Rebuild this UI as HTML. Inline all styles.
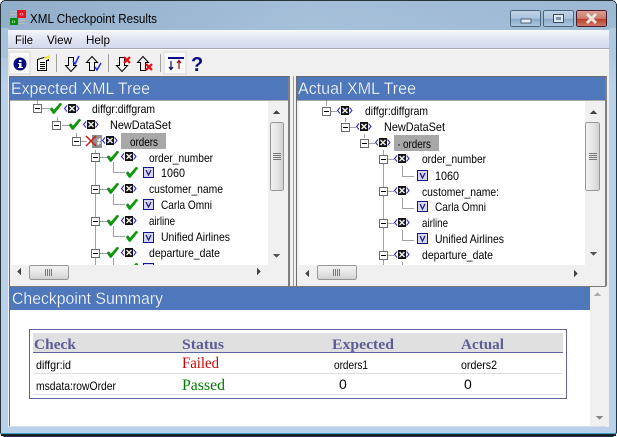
<!DOCTYPE html>
<html><head><meta charset="utf-8"><style>
html,body{margin:0;padding:0;background:#fff;overflow:hidden}
svg{display:block}
text{font-family:"Liberation Sans",sans-serif;fill:#000;font-size:12px}
.s{font-family:"Liberation Serif",serif}
.h{fill:#fff;font-size:17px;stroke:#4e78bb;stroke-width:.3}
.th{font-family:"Liberation Serif",serif;font-weight:bold;font-size:14.500px;fill:#5d5d96}
</style></head><body>
<svg width="617" height="437" viewBox="0 0 617 437" xmlns="http://www.w3.org/2000/svg" shape-rendering="crispEdges">
<defs>
<linearGradient id="frame" x1="0" y1="0" x2="0" y2="1"><stop offset="0" stop-color="#9ab6d1"/><stop offset="0.07" stop-color="#a9c3dc"/><stop offset="0.2" stop-color="#b9d1ea"/><stop offset="1" stop-color="#b9d1ea"/></linearGradient>
<linearGradient id="frameH" x1="0" y1="0" x2="1" y2="0"><stop offset="0" stop-color="#8facc8"/><stop offset="0.5" stop-color="#a6c0da"/><stop offset="1" stop-color="#9cb8d3"/></linearGradient>
<linearGradient id="menu" x1="0" y1="0" x2="0" y2="1"><stop offset="0" stop-color="#f6f8fc"/><stop offset="0.35" stop-color="#e6eaf5"/><stop offset="1" stop-color="#d3d9ec"/></linearGradient>
<linearGradient id="btn" x1="0" y1="0" x2="0" y2="1"><stop offset="0" stop-color="#c2d5e8"/><stop offset="0.5" stop-color="#a9c2dc"/><stop offset="0.55" stop-color="#8aa9c8"/><stop offset="1" stop-color="#b1c9e0"/></linearGradient>
<linearGradient id="cls" x1="0" y1="0" x2="0" y2="1"><stop offset="0" stop-color="#dca097"/><stop offset="0.5" stop-color="#cc7c6c"/><stop offset="0.55" stop-color="#b93f2c"/><stop offset="1" stop-color="#d07a68"/></linearGradient>
<linearGradient id="th" x1="0" y1="0" x2="1" y2="0"><stop offset="0" stop-color="#f2f2f2"/><stop offset="0.5" stop-color="#e6e6e6"/><stop offset="1" stop-color="#cfcfcf"/></linearGradient>
<linearGradient id="tv" x1="0" y1="0" x2="0" y2="1"><stop offset="0" stop-color="#f2f2f2"/><stop offset="0.5" stop-color="#e6e6e6"/><stop offset="1" stop-color="#cfcfcf"/></linearGradient>
<clipPath id="c1"><rect x="11" y="100" width="257" height="165"/></clipPath>
<clipPath id="c2"><rect x="299" y="100" width="286" height="165"/></clipPath>

<g id="minus"><rect x="0.500" y="0.500" width="8" height="8" fill="#fff" stroke="#6a6a6a"/><path d="M2 4.500H7" stroke="#000"/></g>
<path id="check" d="M0 6 L2 4.500 L4 7 L10 0 L12 1 L4.500 10.500 L3 10.500Z" fill="#0a9a0a" stroke="#067006" stroke-width=".4" shape-rendering="auto"/>
<g id="xml"><path d="M3 1.500 L0.500 4.500 L3 7.500 M12.500 1.500 L15 4.500 L12.500 7.500" fill="none" stroke="#2222dd" stroke-width="1" shape-rendering="auto"/><rect x="4" y="0" width="8" height="9" fill="#111"/><path d="M5.500 2 L10.500 7 M10.500 2 L5.500 7" stroke="#eee" stroke-width="1.500" shape-rendering="auto"/></g>
<g id="vb"><rect x="0.500" y="0.500" width="10" height="10" fill="#d6d6ee" stroke="#14148a"/><path d="M3 3 L5.500 8 L8 3" fill="none" stroke="#14148a" stroke-width="1.200" shape-rendering="auto"/></g>
</defs>

<!-- window frame -->
<rect x="0" y="0" width="617" height="437" fill="#fff"/>
<rect x="0.500" y="0.500" width="616" height="436" rx="5" fill="url(#frame)" stroke="#28343c"/>
<rect x="1" y="1" width="615" height="29" rx="4" fill="url(#frameH)" opacity=".85"/>
<rect x="1" y="28" width="8" height="30" fill="#a9c3dc"/>
<rect x="609" y="28" width="7" height="30" fill="#b0c9e2"/>
<path d="M1 434.500H616" stroke="#1c2a30"/><path d="M2 433.500H615" stroke="#3aa0c8"/><path d="M1 435.500H616" stroke="#141c20"/>

<!-- title icon -->
<rect x="17" y="10" width="9" height="8" fill="#ee0f18"/>
<rect x="10" y="11" width="7" height="1" fill="#bbb"/><rect x="10" y="14" width="7" height="1" fill="#bbb"/>
<rect x="10" y="18" width="8" height="7" fill="#0b8a0b"/>
<rect x="18" y="20" width="7" height="1" fill="#bbb"/><rect x="18" y="23" width="7" height="1" fill="#bbb"/>
<text x="19.500" y="16" style="font-size:6px;fill:#fff">‹›</text>
<text x="11.500" y="23.500" style="font-size:6px;fill:#fff">‹›</text>
<text x="30" y="23" textLength="127" lengthAdjust="spacingAndGlyphs" style="font-size:13px">XML Checkpoint Results</text>

<!-- window buttons -->
<rect x="510.500" y="10.500" width="30" height="16" rx="2" fill="url(#btn)" stroke="#4b6478"/>
<rect x="521" y="19" width="10" height="4" fill="#e6edf4" stroke="#4b6478" stroke-width=".6"/>
<rect x="543.500" y="10.500" width="30" height="16" rx="2" fill="url(#btn)" stroke="#4b6478"/>
<rect x="553.500" y="14.500" width="10" height="8" fill="#dfe7ef" stroke="#3c4c5c"/><rect x="556" y="17" width="5" height="3" fill="#7a94ad"/>
<rect x="576.500" y="10.500" width="30" height="16" rx="2" fill="url(#cls)" stroke="#4a1a28"/>
<path d="M587 14 L596 23 M596 14 L587 23" stroke="#e8e4e0" stroke-width="3" shape-rendering="auto"/>

<!-- client -->
<rect x="8" y="30" width="601" height="397" fill="#f0f0f0"/>
<rect x="8" y="30" width="601" height="18" fill="url(#menu)"/>
<rect x="8" y="48" width="601" height="1" fill="#a4a8b0"/>
<rect x="8" y="49" width="601" height="1" fill="#fff"/>
<text x="15" y="44" textLength="18" lengthAdjust="spacingAndGlyphs">File</text>
<text x="47" y="44" textLength="25" lengthAdjust="spacingAndGlyphs">View</text>
<text x="86" y="44" textLength="24" lengthAdjust="spacingAndGlyphs">Help</text>

<!-- toolbar -->
<rect x="9" y="52" width="21" height="22" fill="#f9f9f9" stroke="#d8d8d8"/>
<circle cx="20" cy="64" r="6.500" fill="#0a0a80" shape-rendering="auto"/>
<rect x="19" y="60" width="2.500" height="2" fill="#fff"/><rect x="18" y="63" width="3.500" height="1" fill="#fff"/><rect x="19" y="63" width="2.500" height="4" fill="#fff"/><rect x="18" y="67" width="5" height="1" fill="#fff"/>

<path d="M37.500 59.500 L47.500 56.500 L48.500 60.500 H46.500 V70.500 H37.500Z" fill="#fff" stroke="#000"/>
<path d="M40 62.500H45M40 64.500H45M40 66.500H45M40 68.500H45" stroke="#000"/>
<path d="M44 57 L50 55 L49 59 L45 59Z" fill="#f2e44c"/>
<rect x="56" y="54" width="1" height="18" fill="#a0a0a0"/>

<g fill="none" stroke="#000" shape-rendering="auto">
<path d="M68.500 57.500 H73.500 V65.500 H76.500 L71 71.500 L65.500 65.500 H68.500Z"/>
<path d="M92 56.500 L97.500 62.500 H94.500 V70.500 H89.500 V62.500 H86.500Z"/>
<path d="M119.500 57.500 H124.500 V65.500 H127.500 L122 71.500 L116.500 65.500 H119.500Z"/>
<path d="M143 56.500 L148.500 62.500 H145.500 V70.500 H140.500 V62.500 H137.500Z"/>
</g>
<path d="M73 61 L75 64 L79 56" fill="none" stroke="#1d2de0" stroke-width="1.500" shape-rendering="auto"/>
<path d="M95 67 L97 70 L101 63" fill="none" stroke="#1d2de0" stroke-width="1.500" shape-rendering="auto"/>
<path d="M124 57 L130 63 M130 57 L124 63" stroke="#e80c12" stroke-width="2.200" shape-rendering="auto"/>
<path d="M146 64 L152 70 M152 64 L146 70" stroke="#e80c12" stroke-width="2.200" shape-rendering="auto"/>
<rect x="108" y="54" width="1" height="18" fill="#a0a0a0"/>
<rect x="160" y="54" width="1" height="18" fill="#a0a0a0"/>
<rect x="164" y="52" width="22" height="22" fill="#f9f9f9" stroke="#d8d8d8"/>
<rect x="168" y="57" width="16" height="2" fill="#0a0a90"/>
<path d="M171 61V69M169 67L171 69.500L173 67" fill="none" stroke="#0a0a60" stroke-width="1.200" shape-rendering="auto"/>
<path d="M179 69V61M177 63L179 60.500L181 63" fill="none" stroke="#8a1010" stroke-width="1.200" shape-rendering="auto"/>
<text x="191" y="71" style="font-size:20px;font-weight:bold;fill:#0a0a80">?</text>

<!-- Expected pane -->
<rect x="9" y="76" width="280" height="210" fill="#f0f0f0"/>
<rect x="9" y="76" width="1" height="210" fill="#6c6c6c"/>
<rect x="288" y="76" width="2" height="210" fill="#808080"/>
<rect x="9" y="76" width="280" height="1" fill="#6c6c6c"/>
<rect x="10" y="77" width="278" height="23" fill="#4e78bb"/>
<rect x="10" y="100" width="278" height="1" fill="#a8a8a8"/>
<text class="h" x="11" y="94" textLength="139" lengthAdjust="spacingAndGlyphs">Expected XML Tree</text>
<rect x="11" y="101" width="257" height="164" fill="#fff"/>

<!-- Actual pane -->
<rect x="296" y="76" width="310" height="210" fill="#f0f0f0"/>
<rect x="293" y="76" width="1" height="210" fill="#a0a0a0"/>
<rect x="296" y="76" width="1" height="210" fill="#6c6c6c"/>
<rect x="605" y="76" width="2" height="210" fill="#808080"/>
<rect x="296" y="76" width="310" height="1" fill="#6c6c6c"/>
<rect x="297" y="77" width="308" height="23" fill="#4e78bb"/>
<rect x="297" y="100" width="308" height="1" fill="#a8a8a8"/>
<text class="h" x="298" y="94" textLength="118" lengthAdjust="spacingAndGlyphs">Actual XML Tree</text>
<rect x="299" y="101" width="286" height="164" fill="#fff"/>

<!-- Expected tree -->
<g clip-path="url(#c1)">
<path transform="translate(.5 .5)" d="M37 100V104M57 117V121M76 133V137M95 150V265M113 162V172H125M113 194V204H125M113 226V236H125M113 258V265M42 108H50M62 125H69M81 141H86M100 157H107M100 189H107M100 221H107M100 253H107" stroke="#444" fill="none" stroke-dasharray="1 1"/>
<use href="#minus" x="33" y="104"/><use href="#check" x="50" y="103"/><use href="#xml" x="64" y="104"/>
<text x="92" y="113" textLength="63" lengthAdjust="spacingAndGlyphs">diffgr:diffgram</text>
<use href="#minus" x="52" y="121"/><use href="#check" x="69" y="119"/><use href="#xml" x="83" y="120"/>
<text x="110" y="129" textLength="61" lengthAdjust="spacingAndGlyphs">NewDataSet</text>
<use href="#minus" x="72" y="137"/>
<rect x="92" y="135" width="10" height="13" fill="#909090"/>
<path d="M86 136 L96 146 M96 136 L86 146" stroke="#d01818" stroke-width="1.500" shape-rendering="auto"/>
<path d="M97 140H101M97 143H101M100 138L98 145" stroke="#fff" fill="none" shape-rendering="auto"/>
<use href="#xml" x="102" y="136"/>
<rect x="121" y="133" width="45" height="16" fill="#a8a8a8"/>
<text x="130" y="146" textLength="28" lengthAdjust="spacingAndGlyphs">orders</text>
<use href="#minus" x="91" y="153"/><use href="#check" x="107" y="151"/><use href="#xml" x="121" y="152"/>
<text x="149" y="162" textLength="64" lengthAdjust="spacingAndGlyphs">order_number</text>
<use href="#check" x="126" y="167"/><use href="#vb" x="143" y="167"/>
<text x="161" y="177" textLength="24" lengthAdjust="spacingAndGlyphs">1060</text>
<use href="#minus" x="91" y="185"/><use href="#check" x="107" y="183"/><use href="#xml" x="121" y="184"/>
<text x="149" y="193" textLength="74" lengthAdjust="spacingAndGlyphs">customer_name</text>
<use href="#check" x="126" y="199"/><use href="#vb" x="143" y="199"/>
<text x="161" y="209" textLength="51" lengthAdjust="spacingAndGlyphs">Carla Omni</text>
<use href="#minus" x="91" y="217"/><use href="#check" x="107" y="215"/><use href="#xml" x="121" y="216"/>
<text x="149" y="225" textLength="26" lengthAdjust="spacingAndGlyphs">airline</text>
<use href="#check" x="126" y="231"/><use href="#vb" x="143" y="232"/>
<text x="161" y="241" textLength="69" lengthAdjust="spacingAndGlyphs">Unified Airlines</text>
<use href="#minus" x="91" y="249"/><use href="#check" x="107" y="247"/><use href="#xml" x="121" y="248"/>
<text x="149" y="257" textLength="71" lengthAdjust="spacingAndGlyphs">departure_date</text>
<use href="#check" x="126" y="263"/><use href="#vb" x="143" y="263"/>
</g>

<!-- Actual tree -->
<g clip-path="url(#c2)">
<path transform="translate(.5 .5)" d="M326 100V106M345 118V122M364 134V138M383 150V265M402 166V176H414M402 198V208H414M402 230V240H414M402 262V265M331 111H337M350 127H356M369 143H375M388 159H394M388 191H394M388 223H394M388 255H394" stroke="#444" fill="none" stroke-dasharray="1 1"/>
<use href="#minus" x="322" y="107"/><use href="#xml" x="337" y="106"/>
<text x="365" y="115" textLength="63" lengthAdjust="spacingAndGlyphs">diffgr:diffgram</text>
<use href="#minus" x="341" y="123"/><use href="#xml" x="356" y="122"/>
<text x="384" y="131" textLength="61" lengthAdjust="spacingAndGlyphs">NewDataSet</text>
<use href="#minus" x="360" y="139"/><use href="#xml" x="375" y="138"/>
<rect x="394" y="135" width="45" height="16" fill="#a8a8a8"/>
<text x="397" y="148">·</text>
<text x="403" y="148" textLength="28" lengthAdjust="spacingAndGlyphs">orders</text>
<use href="#minus" x="379" y="155"/><use href="#xml" x="394" y="154"/>
<text x="422" y="163" textLength="64" lengthAdjust="spacingAndGlyphs">order_number</text>
<use href="#vb" x="417" y="170"/>
<text x="435" y="180" textLength="24" lengthAdjust="spacingAndGlyphs">1060</text>
<use href="#minus" x="379" y="187"/><use href="#xml" x="394" y="186"/>
<text x="422" y="196" textLength="77" lengthAdjust="spacingAndGlyphs">customer_name:</text>
<use href="#vb" x="417" y="201"/>
<text x="435" y="211" textLength="51" lengthAdjust="spacingAndGlyphs">Carla Omni</text>
<use href="#minus" x="379" y="219"/><use href="#xml" x="394" y="218"/>
<text x="422" y="227" textLength="26" lengthAdjust="spacingAndGlyphs">airline</text>
<use href="#vb" x="417" y="233"/>
<text x="435" y="243" textLength="69" lengthAdjust="spacingAndGlyphs">Unified Airlines</text>
<use href="#minus" x="379" y="251"/><use href="#xml" x="394" y="250"/>
<text x="422" y="259" textLength="71" lengthAdjust="spacingAndGlyphs">departure_date</text>
</g>

<!-- Scrollbars expected -->
<rect x="268" y="101" width="18" height="164" fill="#f0f0f0"/>
<path d="M273 114H280L276.500 110Z" fill="#444"/>
<rect x="270.500" y="122.500" width="13" height="68" rx="2" fill="url(#th)" stroke="#979797"/>
<path d="M273 153.500H281M273 155.500H281M273 157.500H281M273 159.500H281" stroke="#777"/>
<path d="M273 254H280L276.500 258Z" fill="#555"/>
<rect x="11" y="265" width="275" height="17" fill="#f0f0f0"/>
<path d="M21 268V275L17 271.500Z" fill="#444"/>
<rect x="29.500" y="265.500" width="39" height="14" rx="2" fill="url(#tv)" stroke="#979797"/>
<path d="M45.500 269V276M47.500 269V276M49.500 269V276M51.500 269V276" stroke="#777"/>
<path d="M257 268V275L261 271.500Z" fill="#444"/>

<!-- Scrollbars actual -->
<rect x="585" y="101" width="20" height="164" fill="#f0f0f0"/>
<path d="M590 114H597L593.500 110Z" fill="#444"/>
<rect x="585.500" y="122.500" width="14" height="68" rx="2" fill="url(#th)" stroke="#979797"/>
<path d="M589 153.500H597M589 155.500H597M589 157.500H597M589 159.500H597" stroke="#777"/>
<path d="M590 252H597L593.500 256Z" fill="#555"/>
<rect x="299" y="265" width="306" height="17" fill="#f0f0f0"/>
<path d="M309 270V277L305 273.500Z" fill="#444"/>
<rect x="317.500" y="265.500" width="39" height="14" rx="2" fill="url(#tv)" stroke="#979797"/>
<path d="M333.500 269V276M335.500 269V276M337.500 269V276M339.500 269V276" stroke="#777"/>
<path d="M574 270V277L578 273.500Z" fill="#444"/>

<!-- Summary -->
<rect x="9" y="286" width="597" height="1" fill="#7a7a7a"/>
<rect x="9" y="287" width="1" height="140" fill="#6c6c6c"/>
<rect x="10" y="287" width="580" height="23" fill="#4e78bb"/>
<text class="h" x="12" y="304" textLength="151" lengthAdjust="spacingAndGlyphs">Checkpoint Summary</text>
<rect x="10" y="310" width="580" height="116" fill="#fff"/>
<rect x="590" y="287" width="16" height="140" fill="#f0f0f0"/>
<path d="M594 296H601L597.500 292Z" fill="#aaa"/>
<path d="M596 416H603L599.500 420Z" fill="#888"/>
<rect x="9" y="426" width="597" height="1" fill="#dcdcdc"/>

<rect x="29.500" y="329.500" width="537" height="69" fill="#fff" stroke="#6262a0"/>
<rect x="33" y="333" width="530" height="19" fill="#e0e0e0"/>
<rect x="33" y="352" width="530" height="1" fill="#6262a0"/>
<rect x="33" y="373" width="530" height="1" fill="#dedede"/>
<rect x="33" y="394" width="530" height="1" fill="#dedede"/>
<text class="th" x="34" y="349" textLength="42" lengthAdjust="spacingAndGlyphs">Check</text>
<text class="th" x="182" y="349" textLength="42" lengthAdjust="spacingAndGlyphs">Status</text>
<text class="th" x="332" y="349" textLength="62" lengthAdjust="spacingAndGlyphs">Expected</text>
<text class="th" x="461" y="349" textLength="43" lengthAdjust="spacingAndGlyphs">Actual</text>
<text x="36" y="369" textLength="35" lengthAdjust="spacingAndGlyphs">diffgr:id</text>
<text class="s" x="182" y="368" textLength="37" lengthAdjust="spacingAndGlyphs" style="font-size:16px;fill:#d00000">Failed</text>
<text x="334" y="369" textLength="34" lengthAdjust="spacingAndGlyphs">orders1</text>
<text x="461" y="369" textLength="36" lengthAdjust="spacingAndGlyphs">orders2</text>
<text x="36" y="390" textLength="80" lengthAdjust="spacingAndGlyphs">msdata:rowOrder</text>
<text class="s" x="182" y="390" textLength="43" lengthAdjust="spacingAndGlyphs" style="font-size:16px;fill:#007a00">Passed</text>
<text x="339" y="389" style="font-size:14px">0</text>
<text x="464" y="389" style="font-size:14px">0</text>
</svg>
</body></html>
